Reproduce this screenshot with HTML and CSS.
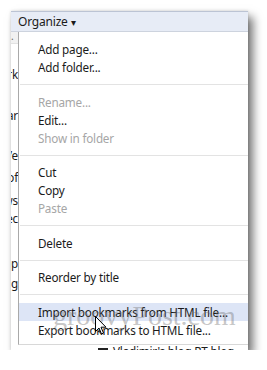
FILE: index.html
```
<!DOCTYPE html>
<html lang="en">
<head>
    <meta charset="UTF-8">
    <meta name="viewport" content="width=device-width, initial-scale=1.0">
    <title>Organize</title>
    <link rel="stylesheet" href="styles.css">
</head>
<body>
    <main class="shot">
        <header class="toolbar">
            <span class="organize">Organize <span class="caret">&#9662;</span></span>
        </header>
        <section class="pane">
            <div class="side">
                <div class="head">.</div>
                <div class="frag f1">rk</div>
                <div class="frag f2">ar</div>
                <div class="frag f3">Ve</div>
                <div class="frag f4">of</div>
                <div class="frag f5">ws</div>
                <div class="frag f6">ec</div>
                <div class="frag f7">op</div>
                <div class="frag f8">g</div>
            </div>
            <div class="list">
                <div class="row last"><span class="fav"></span>Vladimir's blog RT blog</div>
            </div>

            <ul class="menu">
                <li class="item">Add page...</li>
                <li class="item">Add folder...</li>
                <li class="sep"></li>
                <li class="item off">Rename...</li>
                <li class="item">Edit...</li>
                <li class="item off">Show in folder</li>
                <li class="sep"></li>
                <li class="item">Cut</li>
                <li class="item">Copy</li>
                <li class="item off">Paste</li>
                <li class="sep"></li>
                <li class="item">Delete</li>
                <li class="sep"></li>
                <li class="item">Reorder by title</li>
                <li class="sep"></li>
                <li class="item hover">Import bookmarks from HTML file...</li>
                <li class="item">Export bookmarks to HTML file...</li>
            </ul>

            <div class="mark">groovyPost.com</div>
            <svg class="cursor" width="12" height="19" viewBox="0 0 12 19">
                <path d="M0.5 0.5 L0.5 15.5 L4 12 L6.5 18 L8.5 17 L6 11.2 L11 11.2 Z" fill="#fff" stroke="#000" stroke-width="1" stroke-linejoin="round"/>
            </svg>
        </section>
    </main>
</body>
</html>
```

FILE: styles.css
```
* {
    box-sizing: border-box;
    margin: 0;
    padding: 0;
}
body {
    background-color: white;
    color: #1b1b1b;
    font-family: 'Noto Sans', 'Open Sans', sans-serif;
    font-size: 11.7px;
    letter-spacing: -0.2px;
}
.shot {
    margin: 11px 0 0 11px;
    width: 237px;
    height: 339px;
    display: flex;
    flex-direction: column;
    background: white;
    box-shadow: 5px 6px 9px rgba(0, 0, 0, 0.55), 0 0 3px rgba(0, 0, 0, 0.15);
    overflow: hidden;
}
.toolbar {
    height: 21px;
    flex: none;
    background: #e7ecf6;
    border-top: 1px solid #bcc4d4;
    border-bottom: 1px solid #cdd3de;
    padding-left: 7px;
    line-height: 19px;
    font-size: 12px;
}
.caret {
    font-size: 10px;
}
.pane {
    flex: 1;
    position: relative;
    display: flex;
}
.side {
    width: 7px;
    flex: none;
    display: flex;
    flex-direction: column;
    overflow: hidden;
    white-space: nowrap;
}
.head {
    height: 12px;
    background: #f1f1f1;
    border-bottom: 1px solid #e2e2e2;
    line-height: 8px;
    font-size: 10px;
    color: #666;
}
.frag {
    height: 17px;
    line-height: 17px;
    display: flex;
    justify-content: flex-end;
}
.f1 { margin-top: 22px; }
.f2 { margin-top: 24px; }
.f3 { margin-top: 23px; }
.f4 { margin-top: 5px; }
.f5 { margin-top: 6px; }
.f6 { margin-top: 1px; }
.f7 { margin-top: 28px; }
.f8 { margin-top: 3px; }
.list {
    flex: 1;
    display: flex;
    flex-direction: column;
    justify-content: flex-end;
}
.row {
    height: 14px;
    line-height: 14px;
    margin-bottom: -8px;
    padding-left: 80px;
    white-space: nowrap;
    overflow: hidden;
}
.fav {
    display: inline-block;
    width: 10px;
    height: 8px;
    background: #222;
    margin-right: 5px;
}
.menu {
    position: absolute;
    left: 7px;
    top: 0;
    right: 0;
    bottom: 5px;
    list-style: none;
    background: white;
    border-left: 1px solid #a9a9a9;
    border-bottom: 1px solid #d8d8d8;
    padding-top: 8px;
    z-index: 1;
}
.item {
    height: 18px;
    line-height: 18px;
    padding-left: 19px;
    white-space: nowrap;
}
.off {
    color: #a6a6a6;
}
.hover {
    background: #dde5f6;
}
.sep {
    height: 1px;
    background: #e3e3e3;
    margin: 8px 0 7.5px 1px;
}
.mark {
    position: absolute;
    left: 42px;
    top: 268px;
    font-family: 'Liberation Serif', serif;
    font-size: 28px;
    letter-spacing: 0;
    color: rgba(110, 110, 110, 0.4);
    z-index: 2;
    white-space: nowrap;
}
.cursor {
    position: absolute;
    left: 84px;
    top: 284px;
    z-index: 3;
}
```
